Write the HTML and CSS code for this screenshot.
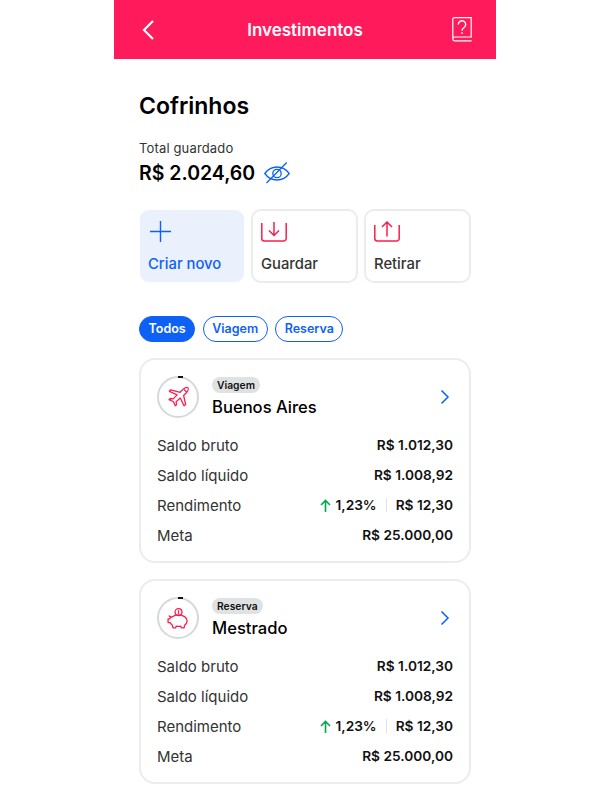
FILE: index.html
```html
<!DOCTYPE html>
<html lang="pt-BR">
<head>
    <meta charset="UTF-8">
    <meta name="viewport" content="width=device-width, initial-scale=1.0">
    <title>Investimentos</title>
    <link rel="stylesheet" href="styles.css">
</head>
<body>
    <div class="phone">
        <header class="top-bar">
            <svg width="17" height="22" viewBox="0 0 17 22"><path d="M12 2 3 11l9 9" fill="none" stroke="#fff" stroke-width="2.200"/></svg>
            <span class="top-title">Investimentos</span>
            <svg width="20" height="25" viewBox="0 0 20 25" fill="none" stroke="#fff" stroke-width="1.200">
                <path d="M.8 21V2A1.400 1.400 0 0 1 2.200.7H19.200V20H2.800a1.900 1.900 0 0 0 0 3.900H19.600"/>
                <path d="M6.300 7.500a3.700 3.700 0 1 1 5.800 3c-1.300.9-2.100 1.600-2.100 3.200" stroke-width="1.400"/>
                <path d="M10 15.200v1.800" stroke-width="1.400"/>
            </svg>
        </header>

        <main class="content">
            <h1>Cofrinhos</h1>
            <p class="total-label">Total guardado</p>
            <div class="total-row">
                <span class="total-value">R$ 2.024,60</span>
                <svg width="26" height="22" viewBox="0 0 26 22" fill="none" stroke="#0d62f5" stroke-width="1.300">
                    <path d="M.8 11.500C4 7 8.500 5 13 5s9 2 12.200 6.500C22 16 17.500 18 13 18S4 16 .8 11.500Z"/>
                    <circle cx="13" cy="11.500" r="4.200"/>
                    <path d="M22.700.5 2.500 21"/>
                </svg>
            </div>

            <div class="actions">
                <div class="action action-new">
                    <svg width="21" height="21" viewBox="0 0 21 21" stroke="#0d62f5" stroke-width="1.400"><path d="M10.500 0v21M0 10.500h21"/></svg>
                    <span>Criar novo</span>
                </div>
                <div class="action">
                    <svg width="26" height="21" viewBox="0 0 26 21" fill="none" stroke="#fa1e4e" stroke-width="1.500">
                        <path d="M.8 2v15.500a2.500 2.500 0 0 0 2.500 2.500h19.400a2.500 2.500 0 0 0 2.500-2.500V2"/>
                        <path d="M13 1v13.500M8 9.500l5 5 5-5"/>
                    </svg>
                    <span>Guardar</span>
                </div>
                <div class="action">
                    <svg width="26" height="21" viewBox="0 0 26 21" fill="none" stroke="#fa1e4e" stroke-width="1.500">
                        <path d="M.8 4v13.500a2.500 2.500 0 0 0 2.500 2.500h19.400a2.500 2.500 0 0 0 2.500-2.500V4"/>
                        <path d="M13 15.500V1M8 6l5-5 5 5"/>
                    </svg>
                    <span>Retirar</span>
                </div>
            </div>

            <div class="chips">
                <span class="chip chip-active">Todos</span>
                <span class="chip">Viagem</span>
                <span class="chip">Reserva</span>
            </div>

            <section class="card">
                <div class="card-head">
                    <div class="ring">
                        <svg width="24" height="22" viewBox="0 0 32 28" fill="none" stroke="#fa1e4e" stroke-width="1.700" stroke-linejoin="round">
                            <path d="M23 3.500c2-1.600 5-2.600 6.200-1.700 1 1 0 4.200-1.700 6.200l-4 4 2.700 12-2.200 1.800-5-10.500-5.500 5 .6 4-1.700 1.500-2.400-5.500-6-2.700 1.600-1.600 4 .5 5.200-5.300L4.500 6.400l1.800-2 12.500 3.300Z"/>
                            <path d="M24 4l3.500 3.500"/>
                        </svg>
                    </div>
                    <div class="card-title">
                        <span class="tag">Viagem</span>
                        <h2>Buenos Aires</h2>
                    </div>
                    <svg class="chevron" width="10" height="16" viewBox="0 0 10 16"><path d="M1.500 1.500 8 8l-6.500 6.500" fill="none" stroke="#0d62f5" stroke-width="1.500"/></svg>
                </div>
                <div class="row"><span>Saldo bruto</span><b>R$ 1.012,30</b></div>
                <div class="row"><span>Saldo líquido</span><b>R$ 1.008,92</b></div>
                <div class="row">
                    <span>Rendimento</span>
                    <b class="yield">
                        <svg width="11" height="13" viewBox="0 0 11 13" fill="none" stroke="#00a84f" stroke-width="1.600"><path d="M5.500 13V1.500M1 6l4.500-4.500L10 6"/></svg>
                        1,23%<i class="sep"></i>R$ 12,30
                    </b>
                </div>
                <div class="row"><span>Meta</span><b>R$ 25.000,00</b></div>
            </section>

            <section class="card">
                <div class="card-head">
                    <div class="ring">
                        <svg width="23" height="23" viewBox="0 0 32 30" fill="none" stroke="#fa1e4e" stroke-width="1.800" stroke-linejoin="round">
                            <circle cx="16" cy="6" r="4.800"/>
                            <path d="M16 3.500v5"/>
                            <path d="M3 11.500l4 1.500c2.500-2 5.500-3 9-3 6.500 0 12 3.500 12 8.500 0 2.500-1.500 4.500-3.500 6l-.8 3.500h-3.700l-.8-2.400c-2 .5-4.400.5-6.400 0l-.8 2.400H8.300l-1-4c-1.300-.8-2.300-2-3-3.300H1.500v-5.200H4c.4-1 .8-1.700 1.300-2.300Z"/>
                        </svg>
                    </div>
                    <div class="card-title">
                        <span class="tag">Reserva</span>
                        <h2>Mestrado</h2>
                    </div>
                    <svg class="chevron" width="10" height="16" viewBox="0 0 10 16"><path d="M1.500 1.500 8 8l-6.500 6.500" fill="none" stroke="#0d62f5" stroke-width="1.500"/></svg>
                </div>
                <div class="row"><span>Saldo bruto</span><b>R$ 1.012,30</b></div>
                <div class="row"><span>Saldo líquido</span><b>R$ 1.008,92</b></div>
                <div class="row">
                    <span>Rendimento</span>
                    <b class="yield">
                        <svg width="11" height="13" viewBox="0 0 11 13" fill="none" stroke="#00a84f" stroke-width="1.600"><path d="M5.500 13V1.500M1 6l4.500-4.500L10 6"/></svg>
                        1,23%<i class="sep"></i>R$ 12,30
                    </b>
                </div>
                <div class="row"><span>Meta</span><b>R$ 25.000,00</b></div>
            </section>
        </main>
    </div>
</body>
</html>
```

FILE: styles.css
```css
body {
    font-family: "Inter", "Noto Sans", sans-serif;
    background-color: #fff;
    color: #111;
    margin: 0;
    padding: 0;
}

.phone {
    width: 382px;
    margin: 0 auto;
}

.top-bar {
    height: 59px;
    background-color: #ff1a5b;
    display: flex;
    align-items: center;
    justify-content: space-between;
    padding: 0 24px 0 27px;
}

.top-title {
    color: #fff;
    font-size: 17px;
    font-weight: 600;
}

.content {
    padding: 0 25px;
}

h1 {
    font-size: 23px;
    font-weight: 600;
    line-height: 28px;
    margin: 33px 0 0;
    color: #000;
}

.total-label {
    font-size: 13px;
    letter-spacing: 0.15px;
    line-height: 16px;
    color: #333;
    margin: 20px 0 0;
}

.total-row {
    display: flex;
    align-items: center;
    gap: 9px;
    height: 28px;
    margin-top: 3px;
}

.total-value {
    font-size: 19.500px;
    font-weight: 600;
    color: #000;
}

.actions {
    display: flex;
    gap: 6px;
    margin-top: 22px;
}

.action {
    flex: 1;
    height: 74px;
    box-sizing: border-box;
    border: 2px solid #ececec;
    border-radius: 10px;
    padding: 10px 8px 8px;
    display: flex;
    flex-direction: column;
    justify-content: space-between;
    align-items: flex-start;
    font-size: 14.800px;
    font-weight: 500;
    color: #333;
}

.action-new {
    flex: none;
    width: 106px;
    border: 1px solid #fff;
    padding: 11px 8px 9px;
    background-color: #ebf0fd;
    color: #0d62f5;
}

.action-new svg {
    margin-left: 2px;
}

.chips {
    display: flex;
    gap: 7.500px;
    margin-top: 33px;
}

.chip {
    height: 26px;
    line-height: 23px;
    box-sizing: border-box;
    padding: 0 8.500px;
    border: 1.500px solid #0d62f5;
    border-radius: 13px;
    font-size: 12.500px;
    font-weight: 600;
    color: #0d62f5;
}

.chip-active {
    background-color: #0d62f5;
    color: #fff;
}

.card {
    box-sizing: border-box;
    height: 205px;
    border: 2px solid #ececec;
    border-radius: 16px;
    padding: 16px 16px 0;
    margin-top: 16px;
}

.card-head {
    display: flex;
    align-items: center;
    height: 42px;
    margin-bottom: 12px;
}

.ring {
    width: 42px;
    height: 42px;
    flex: none;
    box-sizing: border-box;
    border: 2px solid #d5d9d9;
    border-radius: 50%;
    display: flex;
    align-items: center;
    justify-content: center;
    position: relative;
}

.ring::before {
    content: "";
    position: absolute;
    top: -2px;
    left: 19px;
    width: 5px;
    height: 2px;
    background-color: #111;
}

.card-title {
    flex: 1;
    margin-left: 13px;
    display: flex;
    flex-direction: column;
    align-items: flex-start;
    gap: 3px;
}

.tag {
    height: 16px;
    line-height: 16px;
    padding: 0 5px;
    border-radius: 8px;
    background-color: #dfe2e2;
    font-size: 10.300px;
    font-weight: 600;
}

h2 {
    font-size: 16.600px;
    font-weight: 500;
    line-height: 22px;
    margin: 0;
    color: #000;
}

.chevron {
    margin-right: 3px;
}

.row {
    display: flex;
    align-items: center;
    justify-content: space-between;
    height: 30px;
    font-size: 15px;
    color: #333;
}

.row b {
    font-size: 13.700px;
    font-weight: 600;
    color: #111;
}

.yield {
    display: flex;
    align-items: center;
}

.yield svg {
    margin-right: 4px;
}

.sep {
    width: 1px;
    height: 14px;
    margin: 0 9px;
    background-color: #e2e2e2;
}
```
